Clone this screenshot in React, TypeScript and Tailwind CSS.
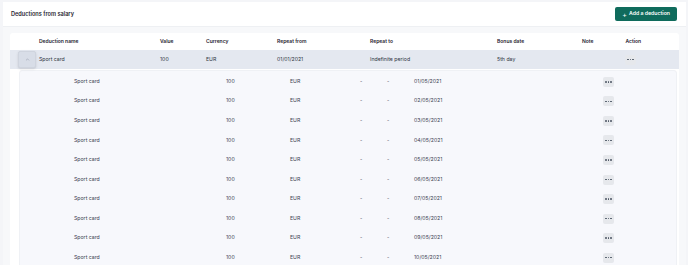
import { ChevronUp } from "lucide-react";

const subRows = Array.from({ length: 10 }, (_, i) => ({
  id: i + 1,
  name: "Sport card",
  value: 100,
  currency: "EUR",
  date: `${String(i + 1).padStart(2, "0")}/05/2021`,
}));

function DotsButton() {
  return (
    <button className="flex h-[10px] w-[11px] items-center justify-center gap-[1px] rounded-[2px] bg-[#e6e8ec]">
      <span className="h-[1.5px] w-[1.5px] rounded-full bg-[#4b5563]" />
      <span className="h-[1.5px] w-[1.5px] rounded-full bg-[#4b5563]" />
      <span className="h-[1.5px] w-[1.5px] rounded-full bg-[#4b5563]" />
    </button>
  );
}

export default function App() {
  return (
    <div
      className="h-[265px] w-[688px] overflow-hidden bg-[#f4f5f8] text-[#2d3340]"
      style={{ fontFamily: "Inter, 'Liberation Sans', sans-serif" }}
    >
      <div className="ml-[3px] mr-[2px] mt-[2px] h-[263px] bg-[#f7f8fa]">
        <div className="flex h-[25px] items-center justify-between border-b border-[#eef0f3] bg-white pl-[8px] pr-[9px]">
          <h2 className="text-[5.6px] font-semibold text-[#1f2430]">Deductions from salary</h2>
          <button className="flex h-[14px] items-center gap-[2px] rounded-[2px] bg-[#0f6b5c] px-[7px] text-[5.2px] font-semibold text-white">
            <span className="text-[7px] font-normal leading-none">+</span>
            Add a deduction
          </button>
        </div>

        <div className="ml-[7px] mr-[7px] mt-[6px] rounded-[3px] bg-white">
          <div className="grid h-[17px] grid-cols-[29px_121px_46px_71px_93px_127px_85px_1fr] items-center text-[5px] font-semibold text-[#1f2430]">
            <span />
            <span>Deduction name</span>
            <span>Value</span>
            <span>Currency</span>
            <span>Repeat from</span>
            <span>Repeat to</span>
            <span>Bonus date</span>
            <span className="flex gap-[32px]">
              <span>Note</span>
              <span>Action</span>
            </span>
          </div>

          <div className="grid h-[19px] grid-cols-[29px_121px_46px_71px_93px_127px_128px_1fr] items-center bg-[#e4e8f0] text-[5.2px]">
            <span className="pl-[8px]">
              <span className="flex h-[17px] w-[18px] items-center justify-center rounded-[2px] border border-[#cfd4de] bg-[#d8dde7] shadow-sm">
                <ChevronUp className="h-[5px] w-[5px] text-[#9aa2b1]" strokeWidth={3} />
              </span>
            </span>
            <span>Sport card</span>
            <span>100</span>
            <span>EUR</span>
            <span>01/01/2021</span>
            <span>Indefinite period</span>
            <span>5th day</span>
            <span>
              <DotsButton />
            </span>
          </div>

          <div className="ml-[9px] mr-[2px] mt-[1px] rounded-[3px] border border-[#eff1f5] bg-[#f7f8fc] pt-[1px]">
            {subRows.map((row) => (
              <div
                key={row.id}
                className="grid h-[19.55px] grid-cols-[54px_152px_64px_70px_27px_27px_189px_1fr] items-center text-[5.2px] text-[#3a4050]"
              >
                <span />
                <span>{row.name}</span>
                <span>{row.value}</span>
                <span>{row.currency}</span>
                <span>-</span>
                <span>-</span>
                <span>{row.date}</span>
                <span>
                  <DotsButton />
                </span>
              </div>
            ))}
          </div>
        </div>
      </div>
    </div>
  );
}
